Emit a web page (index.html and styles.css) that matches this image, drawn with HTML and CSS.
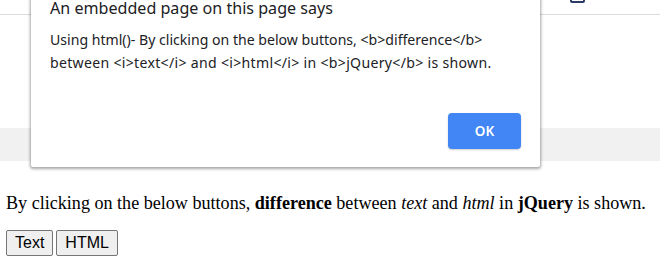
FILE: index.html
```html
<!DOCTYPE html>
<html>
<head>
<meta charset="utf-8">
<link rel="stylesheet" href="styles.css">
</head>
<body>
<div class="topbar"><span class="icon"></span></div>
<div class="spacer"></div>
<div class="band"></div>
<div class="content">
  <p class="msg">By clicking on the below buttons, <b>difference</b> between <i>text</i> and <i>html</i> in <b>jQuery</b> is shown.</p>
  <div class="btns"><button class="btn">Text</button><button class="btn">HTML</button></div>
</div>
<div class="dialog">
  <div class="title">An embedded page on this page says</div>
  <div class="body">Using html()- By clicking on the below buttons, &lt;b&gt;difference&lt;/b&gt;<br><span class="l2">between &lt;i&gt;text&lt;/i&gt; and &lt;i&gt;html&lt;/i&gt; in &lt;b&gt;jQuery&lt;/b&gt; is shown.</span></div>
  <div class="actions"><button class="ok">OK</button></div>
</div>
</body>
</html>
```
FILE: styles.css
```css
html, body { margin: 0; padding: 0; background: #fff; }
body { position: relative; width: 660px; height: 277px; overflow: hidden; }
.topbar { height: 14px; border-bottom: 1px solid #dadce0; position: relative; }
.icon { position: absolute; left: 570px; top: -6px; width: 15px; height: 9px; border: 2px solid #2c3a66; border-radius: 2px; box-sizing: border-box; }
.spacer { height: 113px; }
.band { height: 33px; background: #f1f1f1; }
.content { padding: 0 6px; }
.msg { margin: 31px 0 0; font-family: "Liberation Serif", serif; font-size: 18.1px; line-height: 22px; color: #000; }
.btns { display: flex; gap: 3px; margin-top: 16px; }
.btn { font-family: "Liberation Sans", Arial, sans-serif; font-size: 16px; height: 26px; padding: 0 8px; background: #efefef; border: 1px solid #767676; border-radius: 2px; color: #000; line-height: 24px; }
.dialog { position: absolute; left: 31px; top: -20px; width: 509px; height: 187px; background: #fff; box-shadow: 0 1px 3px 1px rgba(0,0,0,0.35); border-radius: 0 0 2px 2px; box-sizing: border-box; padding: 0 19px; font-family: "Noto Sans", "Open Sans", sans-serif; color: #202124; }
.title { font-size: 16.1px; margin-top: 16px; line-height: 24px; }
.body { font-size: 14.1px; line-height: 22.5px; margin-top: 9px; color: #202124; }
.l2 { letter-spacing: 0.3px; }
.actions { display: flex; justify-content: flex-end; margin-top: 39px; }
.ok { width: 73px; height: 36px; background: #4285f4; color: #fff; border: none; border-radius: 4px; font-family: "Noto Sans", sans-serif; font-size: 13.5px; font-weight: 600; box-shadow: 0 1px 2px rgba(0,0,0,0.2); }
```
